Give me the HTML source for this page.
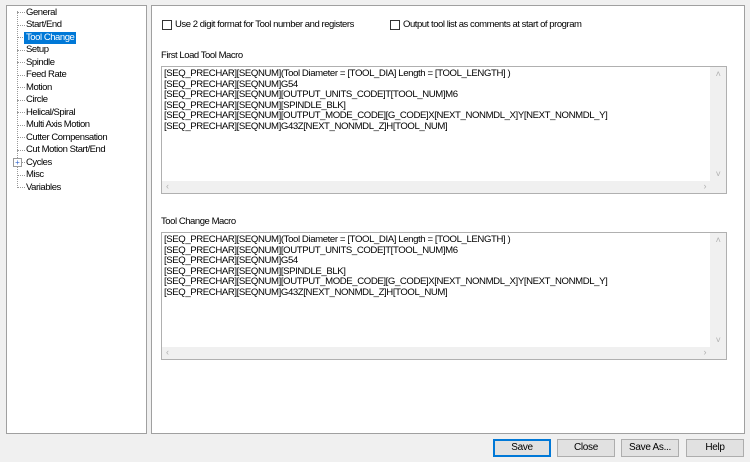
<!DOCTYPE html><html><head><style>
body{margin:0;width:750px;height:462px;background:#f0f0f0;font-family:"Liberation Sans",sans-serif;font-size:9.5px;letter-spacing:-0.45px;color:#000;position:relative;overflow:hidden}
.p{position:absolute;background:#fff;border:1px solid #a0a0a0;box-sizing:border-box}
.t{position:absolute;left:26px;height:12px;line-height:12px;white-space:nowrap}
.h{position:absolute;left:17px;width:8px;border-top:1px dotted #999}
.ta{position:absolute;background:#fff;border:1px solid #b0b0b0;box-sizing:border-box}
.ta pre{margin:0;padding:2px 0 0 2px;font-family:"Liberation Sans",sans-serif;font-size:9.6px;line-height:10.5px;letter-spacing:-0.4px}
.vs{position:absolute;right:0;top:0;width:16px;bottom:12px;background:#f0f0f0;color:#b0b0b0;font-size:9px;text-align:center}
.hs{position:absolute;left:0;right:0;bottom:0;height:12px;background:#f0f0f0;color:#b0b0b0;font-size:9px}
.b{position:absolute;top:439px;height:18px;background:#e1e1e1;border:1px solid #adadad;box-sizing:border-box;text-align:center;line-height:16px;font-size:10px;letter-spacing:-0.3px}
.cb{position:absolute;width:10px;height:10px;border:1px solid #333;background:#fff;box-sizing:border-box}
</style></head><body>
<div class="p" style="left:6px;top:5px;width:141px;height:429px"></div>
<div style="position:absolute;left:17px;top:11px;height:177px;border-left:1px dotted #999"></div>
<div style="position:absolute;left:0;top:0">
<div class="h" style="top:12px"></div><div class="t" style="top:6.7px">General</div>
<div class="h" style="top:25px"></div><div class="t" style="top:19.2px">Start/End</div>
<div class="h" style="top:37px"></div><div class="t" style="top:31.7px;left:24px;background:#0078d7;color:#fff;padding:0 2px">Tool Change</div>
<div class="h" style="top:50px"></div><div class="t" style="top:44.2px">Setup</div>
<div class="h" style="top:62px"></div><div class="t" style="top:56.7px">Spindle</div>
<div class="h" style="top:75px"></div><div class="t" style="top:69.2px">Feed Rate</div>
<div class="h" style="top:87px"></div><div class="t" style="top:81.7px">Motion</div>
<div class="h" style="top:100px"></div><div class="t" style="top:94.2px">Circle</div>
<div class="h" style="top:112px"></div><div class="t" style="top:106.7px">Helical/Spiral</div>
<div class="h" style="top:125px"></div><div class="t" style="top:119.2px">Multi Axis Motion</div>
<div class="h" style="top:137px"></div><div class="t" style="top:131.7px">Cutter Compensation</div>
<div class="h" style="top:150px"></div><div class="t" style="top:144.2px">Cut Motion Start/End</div>
<div class="h" style="top:162px"></div><div class="t" style="top:156.7px">Cycles</div>
<div style="position:absolute;left:13px;top:158px;width:7px;height:7px;border:1px solid #999;background:#fff;font-size:8px;line-height:7px;text-align:center;color:#36c;letter-spacing:0">+</div>
<div class="h" style="top:175px"></div><div class="t" style="top:169.2px">Misc</div>
<div class="h" style="top:187px"></div><div class="t" style="top:181.7px">Variables</div>
</div>
<div class="p" style="left:151px;top:5px;width:594px;height:429px"></div>
<div class="cb" style="left:162px;top:20px"></div><div style="position:absolute;left:175px;top:19px">Use 2 digit format for Tool number and registers</div>
<div class="cb" style="left:390px;top:20px"></div><div style="position:absolute;left:403px;top:19px">Output tool list as comments at start of program</div>
<div style="position:absolute;left:161px;top:50px">First Load Tool Macro</div>
<div class="ta" style="left:161px;top:66px;width:566px;height:128px"><pre>[SEQ_PRECHAR][SEQNUM](Tool Diameter = [TOOL_DIA] Length = [TOOL_LENGTH] )
[SEQ_PRECHAR][SEQNUM]G54
[SEQ_PRECHAR][SEQNUM][OUTPUT_UNITS_CODE]T[TOOL_NUM]M6
[SEQ_PRECHAR][SEQNUM][SPINDLE_BLK]
[SEQ_PRECHAR][SEQNUM][OUTPUT_MODE_CODE][G_CODE]X[NEXT_NONMDL_X]Y[NEXT_NONMDL_Y]
[SEQ_PRECHAR][SEQNUM]G43Z[NEXT_NONMDL_Z]H[TOOL_NUM]</pre>
<div class="vs"><div style="margin-top:2px">˄</div><div style="position:absolute;bottom:2px;width:16px">˅</div></div>
<div class="hs"><span style="position:absolute;left:4px">‹</span><span style="position:absolute;right:20px">›</span></div></div>
<div style="position:absolute;left:161px;top:216px">Tool Change Macro</div>
<div class="ta" style="left:161px;top:232px;width:566px;height:128px"><pre>[SEQ_PRECHAR][SEQNUM](Tool Diameter = [TOOL_DIA] Length = [TOOL_LENGTH] )
[SEQ_PRECHAR][SEQNUM][OUTPUT_UNITS_CODE]T[TOOL_NUM]M6
[SEQ_PRECHAR][SEQNUM]G54
[SEQ_PRECHAR][SEQNUM][SPINDLE_BLK]
[SEQ_PRECHAR][SEQNUM][OUTPUT_MODE_CODE][G_CODE]X[NEXT_NONMDL_X]Y[NEXT_NONMDL_Y]
[SEQ_PRECHAR][SEQNUM]G43Z[NEXT_NONMDL_Z]H[TOOL_NUM]</pre>
<div class="vs"><div style="margin-top:2px">˄</div><div style="position:absolute;bottom:2px;width:16px">˅</div></div>
<div class="hs"><span style="position:absolute;left:4px">‹</span><span style="position:absolute;right:20px">›</span></div></div>
<div class="b" style="left:493px;width:58px;border:2px solid #0078d7;line-height:14px">Save</div>
<div class="b" style="left:557px;width:58px">Close</div>
<div class="b" style="left:621px;width:58px">Save As...</div>
<div class="b" style="left:686px;width:58px">Help</div>
</body></html>
